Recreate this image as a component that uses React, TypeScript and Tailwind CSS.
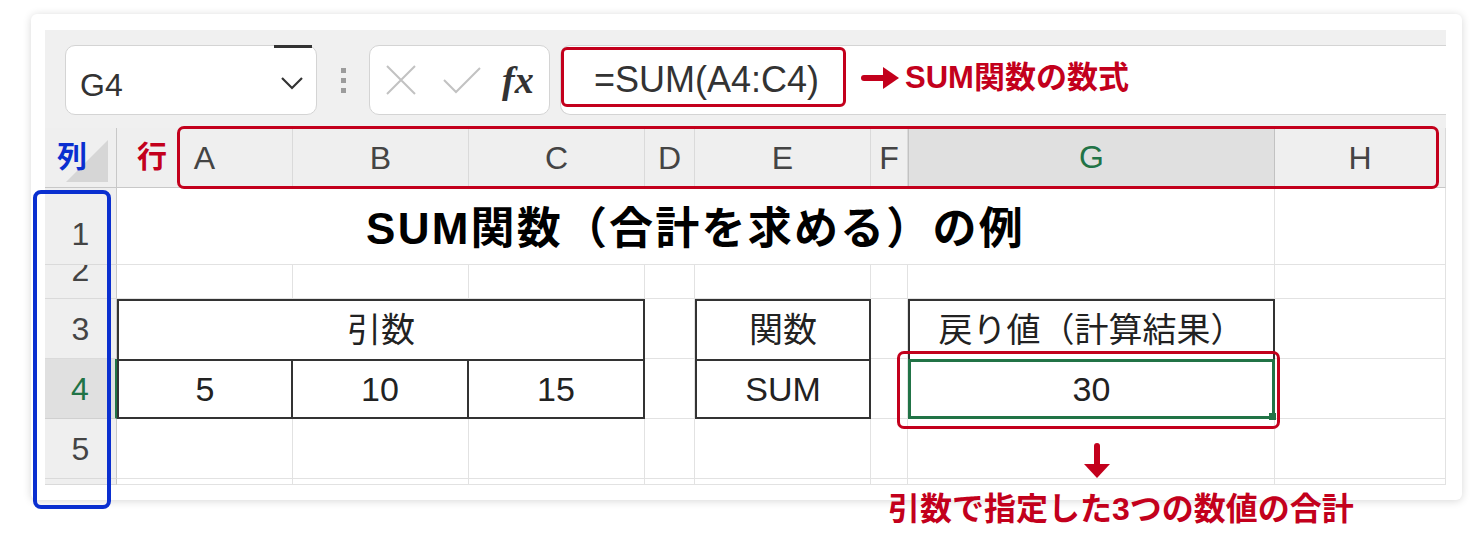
import React from "react";

function Plain() {
  return <div className="bg-white border-r border-b border-[#e2e2e2]" />;
}

function ColHead({ label, active }: { label: string; active?: boolean }) {
  if (active) {
    return (
      <div className="flex items-center justify-center bg-[#e0e0e0] border-x border-[#c2c2c2] border-b-2 border-b-[#217346] text-[32px] text-[#217346]">
        {label}
      </div>
    );
  }
  return (
    <div className="flex items-center justify-center bg-[#efefef] border-r border-[#dadada] border-b border-b-[#c8c8c8] text-[32px] text-[#444]">
      {label}
    </div>
  );
}

function RowHead({ n, active }: { n?: string; active?: boolean }) {
  if (active) {
    return (
      <div className="flex items-center justify-center bg-[#e0e0e0] border-r-2 border-[#217346] border-b border-b-[#d0d0d0] text-[32px] text-[#217346]">
        {n}
      </div>
    );
  }
  return (
    <div className="flex items-center justify-center overflow-hidden bg-[#efefef] border-r border-[#c8c8c8] border-b border-b-[#dadada] text-[32px] text-[#444]">
      {n}
    </div>
  );
}

function FormulaBar() {
  return (
    <div className="flex h-[98px] items-start bg-[#f0f0f0] pl-[20px] pt-[15px]">
      {/* name box */}
      <div className="relative flex h-[70px] w-[252px] items-center justify-between rounded-[10px] border border-[#d4d4d4] bg-white pl-[14px] pr-[12px]">
        <span className="pt-[10px] text-[32px] leading-none text-[#333]">G4</span>
        <svg className="mt-[6px]" width="24" height="14" viewBox="0 0 24 14">
          <polyline points="2,2 12,12 22,2" fill="none" stroke="#333" strokeWidth="2.2" />
        </svg>
        <div className="absolute -top-px right-[4px] h-[3px] w-[38px] bg-[#333]" />
      </div>
      {/* dots */}
      <div className="flex h-[70px] w-[52px] flex-col items-center justify-center gap-[5px]">
        <div className="h-[5px] w-[5px] bg-[#9c9c9c]" />
        <div className="h-[5px] w-[5px] bg-[#9c9c9c]" />
        <div className="h-[5px] w-[5px] bg-[#9c9c9c]" />
      </div>
      {/* cancel / enter / fx */}
      <div className="flex h-[70px] w-[181px] items-center rounded-[10px] border border-[#d4d4d4] bg-white pl-[16px]">
        <svg width="30" height="30" viewBox="0 0 30 30">
          <path d="M1 1 L29 29 M29 1 L1 29" stroke="#c2c2c2" strokeWidth="2" />
        </svg>
        <svg className="ml-[27px]" width="38" height="28" viewBox="0 0 38 28">
          <polyline points="1,14 13,26 37,2" fill="none" stroke="#c2c2c2" strokeWidth="2" />
        </svg>
        <span className="ml-[21px] font-['Liberation_Serif',serif] text-[38px] font-bold italic leading-none text-[#333]">fx</span>
      </div>
      {/* formula input */}
      <div className="ml-[10px] flex h-[70px] flex-1 items-center rounded-l-[10px] border border-r-0 border-[#d4d4d4] bg-white pl-[33px] text-[36px] text-[#333]">
        =SUM(A4:C4)
      </div>
    </div>
  );
}

function Sheet() {
  return (
    <div className="grid grid-cols-[72px_176px_176px_176px_50px_176px_37px_367px_171px] grid-rows-[60px_77px_34px_60px_60px_60px_6px]">
      {/* header row */}
      <div className="flex items-end justify-end bg-[#efefef] border-r border-[#c8c8c8] border-b border-b-[#c8c8c8] pb-[5px] pr-[8px]">
        <svg width="42" height="42" viewBox="0 0 42 42">
          <polygon points="42,0 42,42 0,42" fill="#d6d6d6" />
        </svg>
      </div>
      <ColHead label="A" />
      <ColHead label="B" />
      <ColHead label="C" />
      <ColHead label="D" />
      <ColHead label="E" />
      <ColHead label="F" />
      <ColHead label="G" active />
      <ColHead label="H" />

      {/* row 1 */}
      <div className="flex items-center justify-center bg-[#efefef] border-r border-[#c8c8c8] border-b border-b-[#dadada] pt-[16px] text-[32px] text-[#444]">
        1
      </div>
      <div className="col-span-7 flex items-center justify-center bg-white border-r border-b border-[#e2e2e2] pt-[6px] text-[44px] font-bold tracking-[0.05em] text-black">
        SUM関数（合計を求める）の例
      </div>
      <Plain />

      {/* row 2 */}
      <div className="flex justify-center overflow-hidden bg-[#efefef] border-r border-[#c8c8c8] border-b border-b-[#dadada] text-[32px] leading-[34px] text-[#444]">
        <span className="-translate-y-3">2</span>
      </div>
      <Plain />
      <Plain />
      <Plain />
      <Plain />
      <Plain />
      <Plain />
      <Plain />
      <Plain />

      {/* row 3 */}
      <RowHead n="3" />
      <div className="col-span-3 flex items-center justify-center bg-white border-x-2 border-t-2 border-[#333] text-[34px] text-[#222]">
        引数
      </div>
      <Plain />
      <div className="flex items-center justify-center bg-white border-x-2 border-t-2 border-[#333] text-[34px] text-[#222]">
        関数
      </div>
      <Plain />
      <div className="flex items-center justify-center bg-white border-x-2 border-t-2 border-[#333] text-[34px] text-[#222]">
        戻り値（計算結果）
      </div>
      <Plain />

      {/* row 4 */}
      <RowHead n="4" active />
      <div className="flex items-center justify-center bg-white border-2 border-[#333] text-[34px] text-[#222]">5</div>
      <div className="flex items-center justify-center bg-white border-y-2 border-r-2 border-[#333] text-[34px] text-[#222]">10</div>
      <div className="flex items-center justify-center bg-white border-y-2 border-r-2 border-[#333] text-[34px] text-[#222]">15</div>
      <Plain />
      <div className="flex items-center justify-center bg-white border-2 border-[#333] text-[34px] text-[#222]">SUM</div>
      <Plain />
      <div className="relative flex items-center justify-center bg-white border-[3px] border-[#217346] text-[34px] text-[#222]">
        30
        <div className="absolute -bottom-[4px] -right-[4px] h-[7px] w-[7px] bg-[#217346]" />
      </div>
      <Plain />

      {/* row 5 */}
      <RowHead n="5" />
      <Plain />
      <Plain />
      <Plain />
      <Plain />
      <Plain />
      <Plain />
      <Plain />
      <Plain />

      {/* row 6 (cut) */}
      <RowHead />
      <Plain />
      <Plain />
      <Plain />
      <Plain />
      <Plain />
      <Plain />
      <Plain />
      <Plain />
    </div>
  );
}

export default function App() {
  return (
    <div className="relative h-[543px] w-[1478px] overflow-hidden bg-white pl-[31px] pt-[14px] font-['Liberation_Sans','Noto_Sans_CJK_JP',sans-serif]">
      <div className="h-[486px] w-[1431px] rounded-[6px] bg-white pl-[14px] pt-[16px] shadow-[0_1px_8px_rgba(0,0,0,0.16)]">
        <div className="w-[1401px] bg-[#f0f0f0]">
          <FormulaBar />
          <Sheet />
        </div>
      </div>

      {/* annotations */}
      <div className="absolute left-[561px] top-[47px] h-[60px] w-[285px] rounded-[6px] border-[3px] border-[#c3001c]" />
      <svg className="absolute left-[861px] top-[66px]" width="38" height="24" viewBox="0 0 38 24">
        <rect x="0" y="9" width="26" height="6" rx="3" fill="#c3001c" />
        <polygon points="22,1 38,12 22,23" fill="#c3001c" />
      </svg>
      <div className="absolute left-[905px] top-[62px] text-[31px] font-bold leading-none text-[#c3001c]">SUM関数の数式</div>

      <div className="absolute left-[177px] top-[126px] h-[63px] w-[1262px] rounded-[7px] border-[3px] border-[#c3001c]" />
      <div className="absolute left-[57px] top-[142px] text-[30px] font-bold leading-none text-[#0a2fd0]">列</div>
      <div className="absolute left-[137px] top-[142px] text-[30px] font-bold leading-none text-[#c3001c]">行</div>

      <div className="absolute left-[33px] top-[190px] h-[319px] w-[78px] rounded-[8px] border-[4px] border-[#0a2fd0]" />

      <div className="absolute left-[897px] top-[351px] h-[78px] w-[383px] rounded-[7px] border-[3px] border-[#c3001c]" />
      <svg className="absolute left-[1084px] top-[443px]" width="26" height="36" viewBox="0 0 26 36">
        <rect x="10" y="0" width="6" height="24" rx="3" fill="#c3001c" />
        <polygon points="0,21 26,21 13,35" fill="#c3001c" />
      </svg>
      <div className="absolute left-[888px] top-[493px] text-[32px] font-bold leading-none text-[#c3001c]">引数で指定した3つの数値の合計</div>
    </div>
  );
}
